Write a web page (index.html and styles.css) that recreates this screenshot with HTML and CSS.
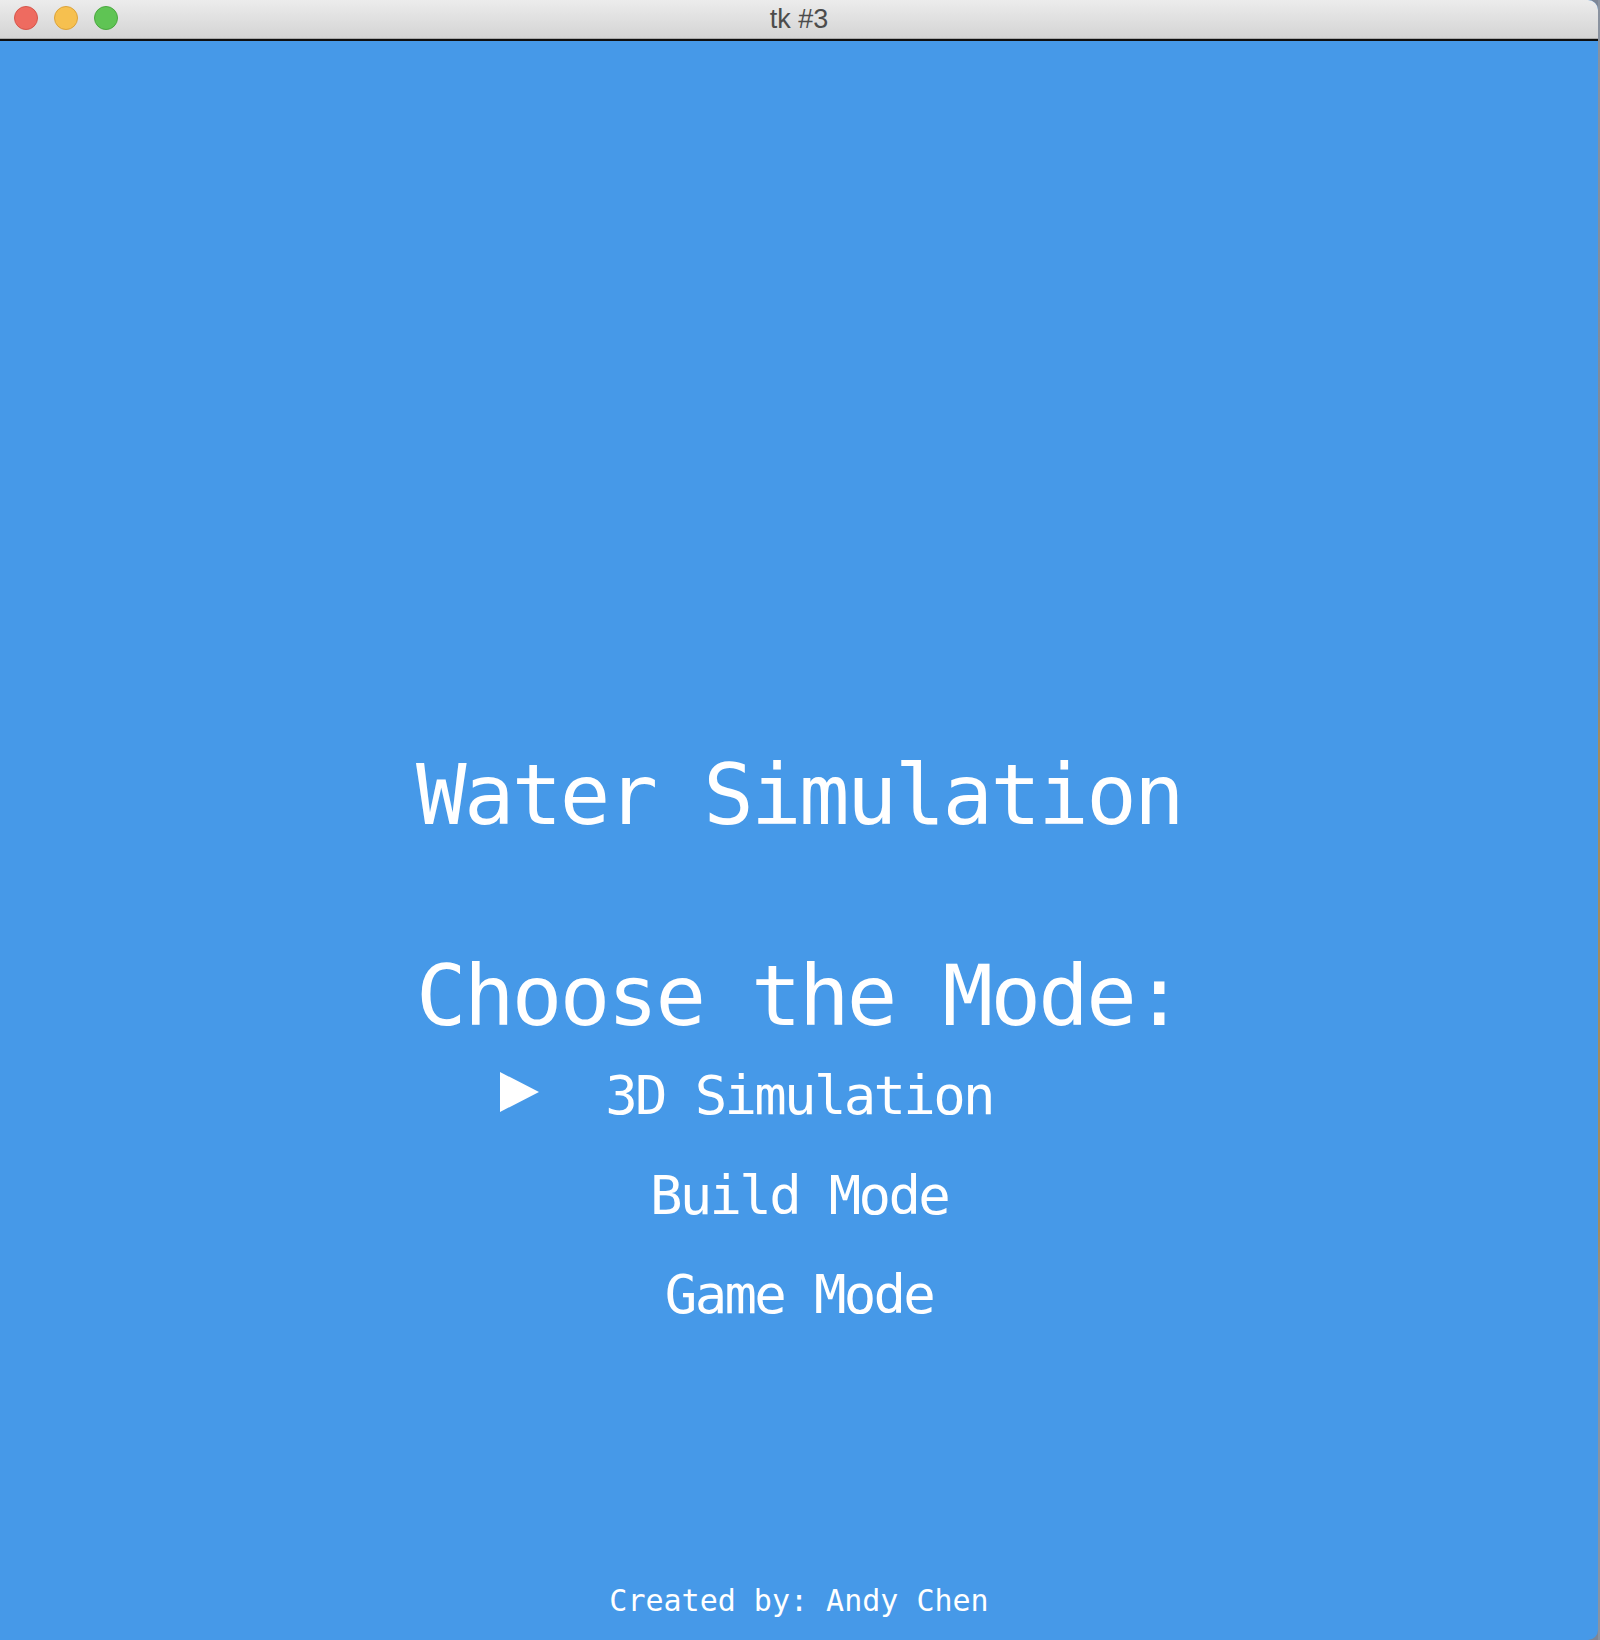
FILE: index.html
```
<!DOCTYPE html>
<html lang="en">
<head>
<meta charset="utf-8">
<title>tk #3</title>
<link rel="stylesheet" href="styles.css">
</head>
<body>
<div class="window">
  <div class="titlebar">
    <div class="lights">
      <span class="light red"></span>
      <span class="light yellow"></span>
      <span class="light green"></span>
    </div>
    <div class="wintitle">tk #3</div>
  </div>
  <div class="divider"></div>
  <main class="content">
    <h1 class="title">Water Simulation</h1>
    <h2 class="subtitle">Choose the Mode:</h2>
    <ul class="menu">
      <li class="item selected">
        <svg class="marker" width="39" height="40" viewBox="0 0 39 40"><polygon points="0,0 39,20 0,40" fill="#ffffff"/></svg>
        3D Simulation
      </li>
      <li class="item">Build Mode</li>
      <li class="item">Game Mode</li>
    </ul>
    <div class="spacer"></div>
    <footer class="footer">Created by: Andy Chen</footer>
  </main>
</div>
<div class="desktop"></div>
</body>
</html>
```
FILE: styles.css
```
html, body {
  margin: 0;
  padding: 0;
}
body {
  width: 1600px;
  height: 1640px;
  display: flex;
  background: #7d8696;
  overflow: hidden;
}
.window {
  width: 1598px;
  height: 1640px;
  display: flex;
  flex-direction: column;
  border-top-right-radius: 10px;
  border-bottom-right-radius: 10px;
  overflow: hidden;
  background: #4699e8;
}
.titlebar {
  height: 38px;
  flex: none;
  position: relative;
  display: flex;
  align-items: center;
  justify-content: center;
  background: linear-gradient(#ececec, #d4d4d4);
  border-bottom: 1px solid #a9a9a9;
}
.lights {
  position: absolute;
  left: 14px;
  top: 6px;
  display: flex;
  gap: 16px;
}
.light {
  width: 24px;
  height: 24px;
  border-radius: 50%;
  box-sizing: border-box;
}
.red { background: #ee6b60; border: 1px solid #d6564b; }
.yellow { background: #f6c04f; border: 1px solid #dca33a; }
.green { background: #5fc454; border: 1px solid #4aa83f; }
.wintitle {
  font-family: "Liberation Sans", Arial, sans-serif;
  font-size: 27px;
  color: #4c4c4c;
  line-height: 38px;
  margin-top: -1px;
}
.divider {
  height: 2px;
  flex: none;
  background: #0f0f0f;
}
.content {
  flex: 1;
  display: flex;
  flex-direction: column;
  align-items: center;
  padding-top: 704px;
  color: #ffffff;
  font-family: "DejaVu Sans Mono", monospace;
}
.title, .subtitle {
  margin: 0;
  font-weight: normal;
  font-size: 84px;
  line-height: 100px;
  letter-spacing: -2.7px;
}
.subtitle {
  margin-top: 101px;
}
.menu {
  list-style: none;
  margin: 0;
  padding: 0;
  display: flex;
  flex-direction: column;
  align-items: center;
}
.item {
  position: relative;
  font-size: 54px;
  line-height: 99.5px;
  letter-spacing: -2.7px;
}
.marker {
  position: absolute;
  right: calc(100% + 66px);
  top: 26px;
}
.spacer {
  flex: 1;
}
.footer {
  font-size: 30px;
  line-height: 40px;
  padding-bottom: 19px;
}
.desktop {
  flex: 1;
  background: linear-gradient(#8b93a0, #7b8594 40%, #a58b5c 45%, #a58b5c 75%, #8b93a0 80%);
}
```
